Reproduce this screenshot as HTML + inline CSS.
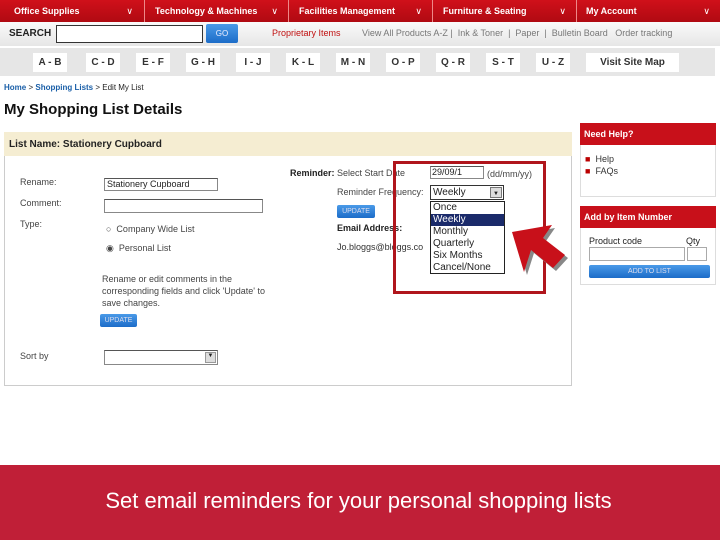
<!DOCTYPE html>
<html><head><style>
*{margin:0;padding:0;box-sizing:border-box}
body{width:720px;height:540px;position:relative;background:#fff;font-family:"Liberation Sans",sans-serif;overflow:hidden;font-size:9px;color:#222}
.a{position:absolute;white-space:nowrap}
.nav{position:absolute;top:0;left:0;width:720px;height:22px;background:linear-gradient(#d0101a,#b00a12)}
.nv{position:absolute;top:0;height:22px;color:#fff;font-size:9px;line-height:22px;border-left:1px solid #e88;font-weight:bold}
.sb{position:absolute;top:22px;left:0;width:720px;height:24px;background:linear-gradient(#fafafa,#e6e6e6)}
.al{position:absolute;top:48px;left:0;width:715px;height:28px;background:#e6e6e6}
.ab{position:absolute;top:53px;height:19px;background:#fff;font-size:10px;line-height:19px;text-align:center;color:#333;font-weight:bold}
.btn{position:absolute;background:linear-gradient(#4a9ae8,#1c6cc8);color:#dde;font-size:7px;text-align:center;border-radius:2px}
.inp{position:absolute;border:1px solid #888;border-top-color:#555;background:#fff}
</style></head><body>
<div class="nav">
<div class="nv" style="left:0;width:143px;border:none;padding-left:14px">Office Supplies<span style="position:absolute;right:10px;font-weight:normal">∨</span></div>
<div class="nv" style="left:144px;width:144px;padding-left:10px">Technology &amp; Machines<span style="position:absolute;right:10px;font-weight:normal">∨</span></div>
<div class="nv" style="left:288px;width:144px;padding-left:10px">Facilities Management<span style="position:absolute;right:10px;font-weight:normal">∨</span></div>
<div class="nv" style="left:432px;width:144px;padding-left:10px">Furniture &amp; Seating<span style="position:absolute;right:10px;font-weight:normal">∨</span></div>
<div class="nv" style="left:576px;width:144px;padding-left:9px">My Account<span style="position:absolute;right:10px;font-weight:normal">∨</span></div>
</div>
<div class="sb"></div>
<div class="a" style="left:9px;top:28px;font-size:10px;font-weight:bold;color:#222">SEARCH</div>
<div class="inp" style="left:56px;top:25px;width:147px;height:18px;border:1px solid #333"></div>
<div class="btn" style="left:206px;top:24px;width:32px;height:19px;line-height:19px;font-size:8px;color:#eef">GO</div>
<div class="a" style="left:272px;top:28px;color:#c01010;font-size:9px">Proprietary Items</div>
<div class="a" style="left:362px;top:28px;color:#777;font-size:9px">View All Products A-Z | &nbsp;Ink &amp; Toner &nbsp;| &nbsp;Paper &nbsp;| &nbsp;Bulletin Board &nbsp;&nbsp;Order tracking</div>
<div class="al"></div>
<div class="ab" style="left:33px;width:34px">A - B</div>
<div class="ab" style="left:86px;width:34px">C - D</div>
<div class="ab" style="left:136px;width:34px">E - F</div>
<div class="ab" style="left:186px;width:34px">G - H</div>
<div class="ab" style="left:236px;width:34px">I - J</div>
<div class="ab" style="left:286px;width:34px">K - L</div>
<div class="ab" style="left:336px;width:34px">M - N</div>
<div class="ab" style="left:386px;width:34px">O - P</div>
<div class="ab" style="left:436px;width:34px">Q - R</div>
<div class="ab" style="left:486px;width:34px">S - T</div>
<div class="ab" style="left:536px;width:34px">U - Z</div>
<div class="ab" style="left:586px;width:93px">Visit Site Map</div>
<div class="a" style="left:4px;top:83px;font-size:8px"><b style="color:#1a5fa8">Home</b> &gt; <b style="color:#1a5fa8">Shopping Lists</b> &gt; Edit My List</div>
<div class="a" style="left:4px;top:101px;font-size:15px;font-weight:bold;color:#111">My Shopping List Details</div>
<div style="position:absolute;left:4px;top:132px;width:568px;height:254px;border:1px solid #ccc"></div>
<div style="position:absolute;left:4px;top:132px;width:568px;height:24px;background:#f5edd2"></div>
<div class="a" style="left:9px;top:139px;font-size:10px;font-weight:bold;color:#222">List Name: Stationery Cupboard</div>
<div class="a" style="left:20px;top:177px;color:#444">Rename:</div>
<div class="inp" style="left:104px;top:178px;width:114px;height:13px;font-size:9px;padding-left:2px;line-height:11px">Stationery Cupboard</div>
<div class="a" style="left:20px;top:198px;color:#444">Comment:</div>
<div class="inp" style="left:104px;top:199px;width:159px;height:14px"></div>
<div class="a" style="left:20px;top:219px;color:#444">Type:</div>
<div class="a" style="left:106px;top:224px;color:#444">○ &nbsp;Company Wide List</div>
<div class="a" style="left:106px;top:243px;color:#444">◉ &nbsp;Personal List</div>
<div class="a" style="left:102px;top:273px;color:#444;line-height:12px;white-space:normal;width:180px">Rename or edit comments in the corresponding fields and click 'Update' to save changes.</div>
<div class="btn" style="left:100px;top:314px;width:37px;height:13px;line-height:13px">UPDATE</div>
<div class="a" style="left:20px;top:351px;color:#444">Sort by</div>
<div class="inp" style="left:104px;top:350px;width:114px;height:15px"><div style="position:absolute;right:1px;top:1px;width:11px;height:11px;background:#ddd;border:1px solid #999;font-size:6px;text-align:center">▼</div></div>
<div class="a" style="left:290px;top:168px;color:#444"><b style="color:#222">Reminder:</b> Select Start Date</div>
<div class="inp" style="left:430px;top:166px;width:54px;height:13px;font-size:9px;line-height:11px;padding-left:1px">29/09/1</div>
<div class="a" style="left:487px;top:169px;color:#444">(dd/mm/yy)</div>
<div class="a" style="left:337px;top:187px;color:#444">Reminder Frequency:</div>
<div class="inp" style="left:430px;top:185px;width:74px;height:15px;font-size:10px;line-height:13px;padding-left:2px;border-color:#333">Weekly<div style="position:absolute;right:1px;top:1px;width:12px;height:11px;background:#ddd;border:1px solid #777;font-size:6px;text-align:center">▼</div></div>
<div class="btn" style="left:337px;top:205px;width:38px;height:13px;line-height:13px">UPDATE</div>
<div class="a" style="left:337px;top:223px;font-weight:bold;color:#222">Email Address:</div>
<div class="a" style="left:337px;top:242px;color:#333">Jo.bloggs@bloggs.co</div>
<div style="position:absolute;left:430px;top:201px;width:75px;height:73px;background:#fff;border:1px solid #222;font-size:10px;line-height:12px;color:#222">
<div style="padding-left:2px">Once</div><div style="padding-left:2px;background:#1a2a6a;color:#fff">Weekly</div><div style="padding-left:2px">Monthly</div><div style="padding-left:2px">Quarterly</div><div style="padding-left:2px">Six Months</div><div style="padding-left:2px">Cancel/None</div></div>
<div style="position:absolute;left:393px;top:161px;width:153px;height:133px;border:3px solid #b0151c"></div>
<svg style="position:absolute;left:0;top:0" width="720" height="540">
<polygon points="515,235 555,228 546,241 568,258 556,271 534,253 527,275" fill="#888"/>
<polygon points="512,232 552,225 543,238 565,255 553,268 531,250 524,272" fill="#c8101a"/>
</svg>
<div style="position:absolute;left:580px;top:123px;width:136px;height:74px;border:1px solid #ddd"></div>
<div style="position:absolute;left:580px;top:123px;width:136px;height:22px;background:#c8101a;color:#fff;font-size:9px;font-weight:bold;line-height:22px;padding-left:4px">Need Help?</div>
<div class="a" style="left:585px;top:153px;color:#333;line-height:12px"><span style="color:#b00">■</span> &nbsp;Help<br><span style="color:#b00">■</span> &nbsp;FAQs</div>
<div style="position:absolute;left:580px;top:206px;width:136px;height:79px;border:1px solid #ddd"></div>
<div style="position:absolute;left:580px;top:206px;width:136px;height:22px;background:#c8101a;color:#fff;font-size:9px;font-weight:bold;line-height:22px;padding-left:4px">Add by Item Number</div>
<div class="a" style="left:589px;top:236px;color:#222">Product code</div>
<div class="a" style="left:686px;top:236px;color:#222">Qty</div>
<div class="inp" style="left:589px;top:247px;width:96px;height:14px;border-color:#aaa"></div>
<div class="inp" style="left:687px;top:247px;width:20px;height:14px;border-color:#aaa"></div>
<div class="btn" style="left:589px;top:265px;width:121px;height:13px;line-height:13px">ADD TO LIST</div>
<div style="position:absolute;left:0;top:465px;width:720px;height:75px;background:#c01f37"></div>
<div class="a" style="left:0;width:717px;text-align:center;top:488px;color:#fff;font-size:22px">Set email reminders for your personal shopping lists</div>
</body></html>
